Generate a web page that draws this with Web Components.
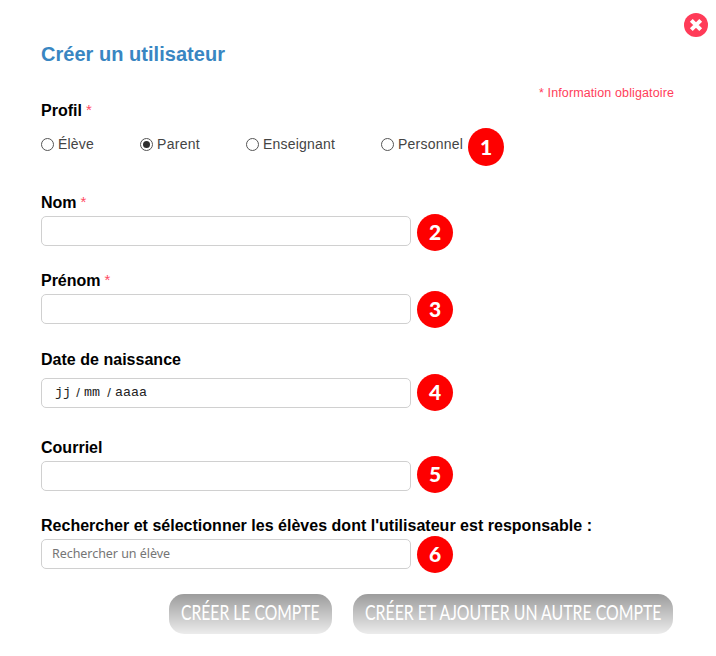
<!DOCTYPE html>
<html lang="fr">
<head>
<meta charset="utf-8">
<title>Créer un utilisateur</title>
<style>
body{margin:0;background:#fff;font-family:"Liberation Sans",Arial,sans-serif}
</style>
</head>
<body>
<user-form></user-form>
<script>
class Base extends HTMLElement{
  constructor(){super();this.attachShadow({mode:'open'}).innerHTML=this.view();}
  view(){return '';}
}

// One line of text fitted to a given width, by spacing or by condensing.
customElements.define('fit-text',class extends Base{
  view(){return `<style>:host{display:block;white-space:pre;width:max-content}span{display:inline-block;transform-origin:0 50%}</style><span><slot></slot></span>`;}
  connectedCallback(){
    const s=this.shadowRoot.querySelector('span'),w=+this.getAttribute('w');
    if(!w)return;
    const n=s.getBoundingClientRect().width;
    if(this.hasAttribute('condense')){s.style.transform=`scaleX(${w/n})`;}
    else{s.style.letterSpacing=(w-n)/this.textContent.length+'px';}
    this.style.width=w+'px';
  }
});

customElements.define('step-badge',class extends Base{
  view(){return `<style>:host{box-sizing:border-box;display:flex;align-items:center;justify-content:center;flex:none;width:36px;height:37px;padding-bottom:2px;border-radius:50%;background:#fe0000;color:#fff;font:900 21px/35px Lato,"Open Sans",sans-serif}</style><slot></slot>`;}
});

customElements.define('close-button',class extends Base{
  view(){return `<style>:host{display:block;width:24px;height:24px}svg{display:block}</style>
  <svg width="24" height="24" viewBox="0 0 24 24"><circle cx="12" cy="12" r="12" fill="#ff3b58"/><path d="M7.3 7.3l9.400 9.400M16.700 7.300l-9.400 9.400" stroke="#fff" stroke-width="4" stroke-linecap="butt"/></svg>`;}
});

customElements.define('field-label',class extends Base{
  view(){return `<style>:host{display:flex;gap:4px;font-weight:bold;font-size:16px;line-height:18px;height:18px;color:#000}
  i{display:none;font:normal 15px/16px "Liberation Sans",Arial,sans-serif;color:#ff4a62}
  :host([required]) i{display:block}</style><slot></slot><i>*</i>`;}
});

customElements.define('radio-option',class extends Base{
  view(){return `<style>:host{display:flex;align-items:center;gap:4px;font-size:14px;line-height:16px;color:#444}
  b{box-sizing:border-box;display:flex;width:13px;height:13px;border:1px solid #555;border-radius:50%;align-items:center;justify-content:center;flex:none;background:#fff}
  :host([checked]) b::after{content:"";width:7px;height:7px;border-radius:50%;background:#2e2e2e}</style><b></b><slot></slot>`;}
});

customElements.define('form-field',class extends Base{
  view(){return `<style>:host{display:block}
  .row{display:flex;align-items:center;gap:6px;height:30px;margin-top:var(--gap,4px)}
  .box{box-sizing:border-box;width:370px;height:30px;border:1px solid #d0d0d0;border-radius:5px;background:#fff;display:flex;align-items:center;flex:none}
  ::slotted(step-badge){margin-top:var(--shift,0px)}</style>
  <slot name="label"></slot><div class="row"><div class="box"><slot></slot></div><slot name="badge"></slot></div>`;}
});

customElements.define('date-hint',class extends Base{
  view(){return `<style>:host{display:grid;grid-template-columns:17px 12px 19px 12px 34px;padding-left:13px;font:13.33px/16px "Liberation Mono","Courier New",monospace;color:#222}
  i{font:normal 13px/16px "Liberation Sans",sans-serif;text-align:center}</style>
  <span>jj</span><i>/</i><span>mm</span><i>/</i><span>aaaa</span>`;}
});

customElements.define('pill-button',class extends Base{
  view(){return `<style>:host{box-sizing:border-box;display:flex;height:40px;padding:0 12px 4px;align-items:center;border-radius:15px;background:linear-gradient(#9c9c9c,#ececec);color:#fff;font:400 20.5px/36px Lato,sans-serif}</style><slot></slot>`;}
});

customElements.define('user-form',class extends Base{
  view(){return `<style>
  :host{box-sizing:border-box;display:flow-root;width:716px;height:656px;background:#fff}
  close-button{margin:13px 0 0 684px}
  h1{margin:6px 0 0 41px;font-size:20px;line-height:22px;color:#3986c2}
  .info{margin:21px 0 0 539px;font-size:12.5px;line-height:15px;color:#ff3d5a}
  main{margin-left:41px}
  .radios{display:grid;grid-template-columns:99px 106px 135px 87px 36px;height:38px;align-items:center;margin-top:8px}
  .radios radio-option{margin-top:-6px}
  .radios step-badge{height:38px}
  .actions{display:flex;gap:21px;padding:25px 0 0 128px}
  .hint{margin-left:10px;font:12.500px/18px "Noto Sans","Open Sans",sans-serif;color:#757575}
  </style>
  <close-button></close-button>
  <h1><fit-text w="184">Créer un utilisateur</fit-text></h1>
  <div class="info"><fit-text w="135">* Information obligatoire</fit-text></div>
  <main>
    <field-label required style="margin-top:1px"><fit-text w="41">Profil</fit-text></field-label>
    <div class="radios">
      <radio-option><fit-text w="36">Élève</fit-text></radio-option>
      <radio-option checked><fit-text w="43">Parent</fit-text></radio-option>
      <radio-option><fit-text w="72">Enseignant</fit-text></radio-option>
      <radio-option><fit-text w="65">Personnel</fit-text></radio-option>
      <step-badge>1</step-badge>
    </div>
    <form-field style="margin-top:28px;--shift:2px"><field-label slot="label" required><fit-text w="35.5">Nom</fit-text></field-label><step-badge slot="badge">2</step-badge></form-field>
    <form-field style="margin-top:26px"><field-label slot="label" required><fit-text w="59.5">Prénom</fit-text></field-label><step-badge slot="badge">3</step-badge></form-field>
    <form-field style="margin-top:27px;--gap:9px;--shift:-1px"><field-label slot="label"><fit-text w="140">Date de naissance</fit-text></field-label><date-hint></date-hint><step-badge slot="badge">4</step-badge></form-field>
    <form-field style="margin-top:31px;--shift:-3px"><field-label slot="label"><fit-text w="61.5">Courriel</fit-text></field-label><step-badge slot="badge">5</step-badge></form-field>
    <form-field style="margin-top:26px"><field-label slot="label"><fit-text w="551">Rechercher et sélectionner les élèves dont l'utilisateur est responsable :</fit-text></field-label><fit-text class="hint" w="118">Rechercher un élève</fit-text><step-badge slot="badge">6</step-badge></form-field>
    <div class="actions">
      <pill-button><fit-text condense w="138.5">CRÉER LE COMPTE</fit-text></pill-button>
      <pill-button><fit-text condense w="296.5">CRÉER ET AJOUTER UN AUTRE COMPTE</fit-text></pill-button>
    </div>
  </main>`;}
});
</script>
</body>
</html>
